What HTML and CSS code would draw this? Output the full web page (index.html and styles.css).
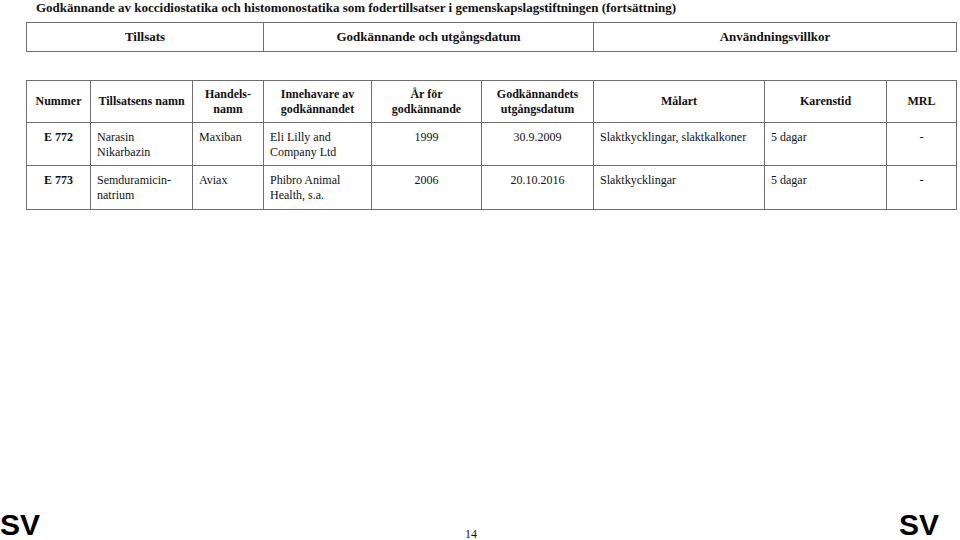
FILE: index.html
```html
<!DOCTYPE html>
<html lang="sv">
<head>
<meta charset="utf-8">
<link rel="stylesheet" href="styles.css">
</head>
<body>
<div class="page">
  <h1 class="title">Godkännande av koccidiostatika och histomonostatika som fodertillsatser i gemenskapslagstiftningen (fortsättning)</h1>
  <table class="top">
    <colgroup><col class="c1"><col class="c2"><col class="c3"></colgroup>
    <tr><th>Tillsats</th><th>Godkännande och utgångsdatum</th><th>Användningsvillkor</th></tr>
  </table>
  <table class="main">
    <colgroup>
      <col class="w1"><col class="w2"><col class="w3"><col class="w4"><col class="w5"><col class="w6"><col class="w7"><col class="w8"><col class="w9">
    </colgroup>
    <thead>
      <tr>
        <th>Nummer</th>
        <th>Tillsatsens namn</th>
        <th>Handels-<br>namn</th>
        <th>Innehavare av<br>godkännandet</th>
        <th>År för<br>godkännande</th>
        <th>Godkännandets<br>utgångsdatum</th>
        <th>Målart</th>
        <th>Karenstid</th>
        <th>MRL</th>
      </tr>
    </thead>
    <tbody>
      <tr>
        <td class="num">E 772</td>
        <td>Narasin<br>Nikarbazin</td>
        <td>Maxiban</td>
        <td>Eli Lilly and<br>Company Ltd</td>
        <td class="ctr">1999</td>
        <td class="ctr">30.9.2009</td>
        <td>Slaktkycklingar, slaktkalkoner</td>
        <td>5 dagar</td>
        <td class="ctr">-</td>
      </tr>
      <tr>
        <td class="num">E 773</td>
        <td>Semduramicin-<br>natrium</td>
        <td>Aviax</td>
        <td>Phibro Animal<br>Health, s.a.</td>
        <td class="ctr">2006</td>
        <td class="ctr">20.10.2016</td>
        <td>Slaktkycklingar</td>
        <td>5 dagar</td>
        <td class="ctr">-</td>
      </tr>
    </tbody>
  </table>
  <div class="footer">
    <span class="sv">SV</span>
    <span class="pageno">14</span>
    <span class="sv">SV</span>
  </div>
</div>
</body>
</html>
```
FILE: styles.css
```css
html, body {
  margin: 0;
  padding: 0;
  background: #fff;
}
.page {
  width: 960px;
  height: 540px;
  display: flex;
  flex-direction: column;
  font-family: "Liberation Serif", "Times New Roman", serif;
  color: #111;
  overflow: hidden;
}
.title {
  margin: 0;
  padding: 0 0 0 36px;
  font-size: 13px;
  line-height: 15px;
  font-weight: bold;
  white-space: nowrap;
}
table {
  border-collapse: collapse;
  table-layout: fixed;
  width: 930px;
  margin-left: 26px;
}
th, td {
  border: 1px solid #6e6e6e;
}
.top {
  margin-top: 7px;
}
.top .c1 { width: 237px; }
.top .c2 { width: 330px; }
.top .c3 { width: 363px; }
.top th {
  height: 28px;
  padding: 0;
  font-size: 13px;
  font-weight: bold;
  text-align: center;
  vertical-align: middle;
}
.main {
  margin-top: 28px;
}
.w1 { width: 64px; }
.w2 { width: 102px; }
.w3 { width: 71px; }
.w4 { width: 108px; }
.w5 { width: 110px; }
.w6 { width: 112px; }
.w7 { width: 171px; }
.w8 { width: 122px; }
.w9 { width: 70px; }
.main th {
  height: 41px;
  padding: 0;
  font-size: 12px;
  line-height: 15px;
  font-weight: bold;
  text-align: center;
  vertical-align: middle;
}
.main td {
  padding: 7px 0 0 6px;
  font-size: 12px;
  line-height: 15px;
  vertical-align: top;
  height: 35px;
}
.main tbody tr:nth-child(2) td {
  height: 36px;
}
.main td.num {
  font-weight: bold;
  text-align: center;
  padding-left: 0;
}
.main td.ctr {
  text-align: center;
  padding-left: 0;
}
.footer {
  margin-top: auto;
  display: grid;
  grid-template-columns: 465px 1fr auto;
  align-items: end;
  padding: 0 21px 1px 0;
}
.sv {
  font-family: "Liberation Sans", Arial, sans-serif;
  font-weight: bold;
  font-size: 30px;
  line-height: 28px;
  color: #000;
}
.pageno {
  font-size: 12px;
  line-height: 12px;
  margin-bottom: -1px;
}
```
